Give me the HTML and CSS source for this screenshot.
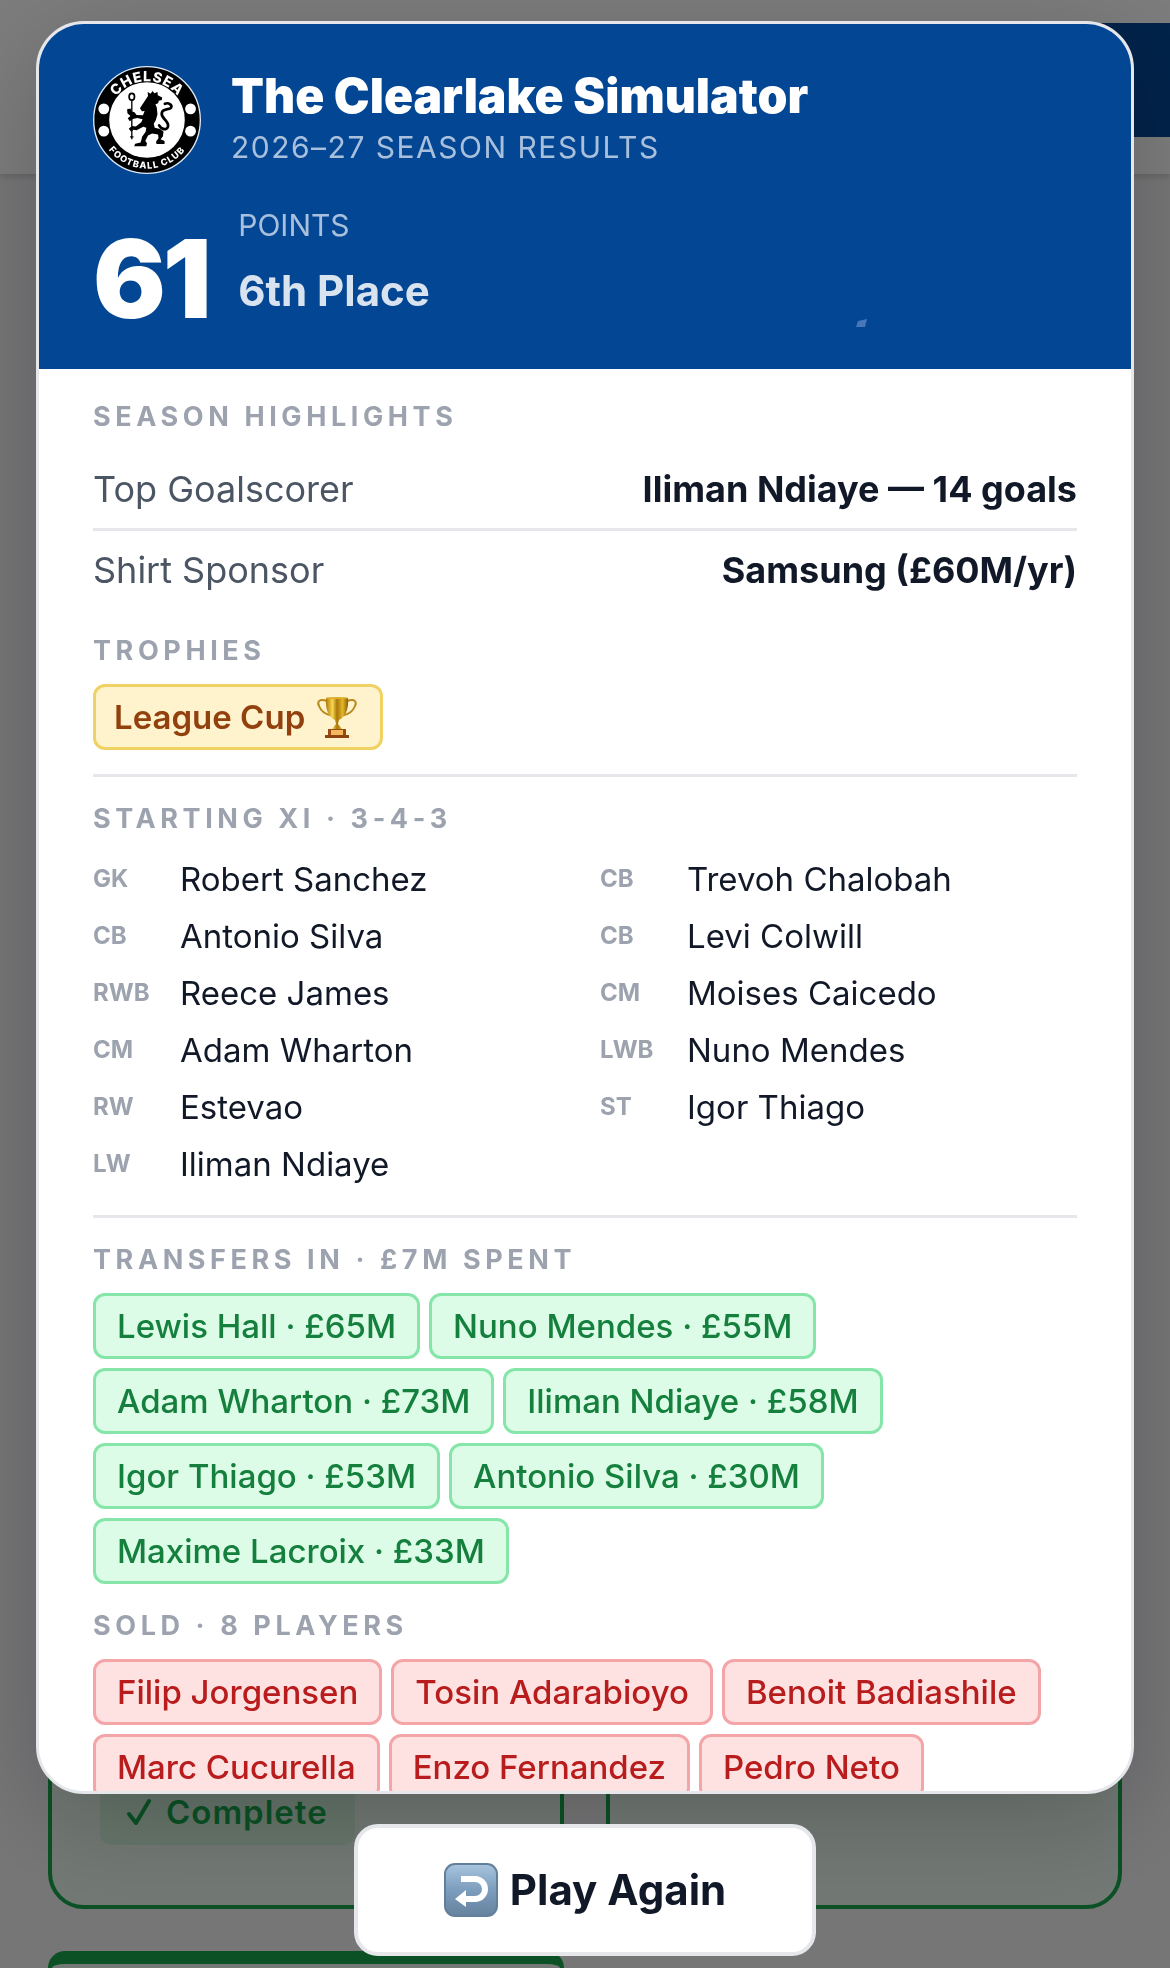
FILE: index.html
```html
<!DOCTYPE html>
<html lang="en">
<head>
    <meta charset="UTF-8">
    <meta name="viewport" content="width=device-width, initial-scale=1.0">
    <title>The Clearlake Simulator</title>
    <link rel="stylesheet" href="styles.css">
</head>
<body>
    <!-- Page behind the results window -->
    <div class="page" aria-hidden="true">
        <header class="topbar">
            <div class="topbar-action"></div>
        </header>
        <main class="board">
            <section class="task">
                <span class="task-status">
                    <svg class="check" viewBox="0 0 24 28"><path d="M2 16l7 9L22 3" fill="none" stroke="currentColor" stroke-width="4" stroke-linecap="round" stroke-linejoin="round"/></svg>
                    Complete
                </span>
            </section>
            <section class="task"></section>
            <section class="task task-next"></section>
        </main>
    </div>

    <div class="overlay">
        <div class="results" role="dialog" aria-labelledby="resultsTitle">
            <div class="results-header">
                <div class="brand">
                    <svg class="crest" viewBox="40 35 320 320" role="img" aria-label="Chelsea Football Club">
                        <defs>
                            <path id="arcTop" d="M85 195a115 115 0 0 1 230 0"/>
                            <path id="arcBottom" d="M56 195a144 144 0 0 0 288 0"/>
                        </defs>
                        <circle cx="200" cy="195" r="158" fill="#000" stroke="#dfe9f5" stroke-width="4"/>
                        <circle cx="200" cy="195" r="112" fill="#fff"/>
                        <g fill="#fff">
                            <circle cx="72" cy="162" r="16"/>
                            <circle cx="72" cy="228" r="16"/>
                            <circle cx="329" cy="162" r="16"/>
                            <circle cx="329" cy="228" r="16"/>
                        </g>
                        <text class="crest-name"><textPath href="#arcTop" startOffset="50%">CHELSEA</textPath></text>
                        <text class="crest-club"><textPath href="#arcBottom" startOffset="50%">FOOTBALL CLUB</textPath></text>
                        <!-- staff -->
                        <ellipse cx="155" cy="126" rx="8" ry="10" fill="none" stroke="#000" stroke-width="5"/>
                        <path d="M155 136v116M150 245h10" stroke="#000" stroke-width="4" fill="none"/>
                        <!-- lion -->
                        <path d="M203 124l-1-12 9 5 5-8 6 7 9-4 1 10 13 6-1 8-9 2-2 7-8 3 4 10 2 20-5 18-6 10 3 12 16 4 10 8-2 14-7 8 12 5v9h-24l-1-7 7-10-1-11-18-3-12 6-8 16 5 7-2 9h-36l3-8 16-3 5-18 10-14 2-12-9-3-20 10-9-1-7 6-7-9 9-8 12 1 16-12 4-9-16-4-13 3-9 7-6-9 8-7-9-8-1-12 10-2 4 9 8 2 6 8 19 1 5-13-8 1-6-9z" fill="#000"/>
                        <path d="M236 211c14 20 32 10 25-6-6-14-21-17-17-32 4-13 22-8 27-14 5-8-7-17-18-12" fill="none" stroke="#000" stroke-width="8" stroke-linecap="round"/>
                    </svg>
                    <div>
                        <h1 class="title" id="resultsTitle">The Clearlake Simulator</h1>
                        <p class="subtitle">2026–27 SEASON RESULTS</p>
                    </div>
                </div>
                <div class="score">
                    <span class="score-value">61</span>
                    <div>
                        <p class="score-label">POINTS</p>
                        <p class="score-place">6th Place</p>
                    </div>
                    <svg class="score-mark" viewBox="0 0 12 9"><path d="M1 9l2-6 9-2-2 8z" fill="#4677b8"/></svg>
                </div>
            </div>

            <div class="results-body">
                <h2>SEASON HIGHLIGHTS</h2>
                <dl class="highlights">
                    <div class="highlight"><dt>Top Goalscorer</dt><dd>Iliman Ndiaye — 14 goals</dd></div>
                    <div class="highlight"><dt>Shirt Sponsor</dt><dd>Samsung (£60M/yr)</dd></div>
                </dl>

                <h2>TROPHIES</h2>
                <ul class="chips">
                    <li class="chip chip-trophy">League Cup
                        <svg class="trophy" viewBox="0 0 44 44">
                            <defs>
                                <linearGradient id="gold">
                                    <stop offset="0" stop-color="#b07908"/>
                                    <stop offset=".3" stop-color="#f7d651"/>
                                    <stop offset=".5" stop-color="#a87609"/>
                                    <stop offset=".75" stop-color="#e3b72a"/>
                                    <stop offset="1" stop-color="#8a5a04"/>
                                </linearGradient>
                            </defs>
                            <path d="M12 6C4 3 2 7 4 11c2 5 6 8 11 9M32 6c8-3 10 1 8 5-2 5-6 8-11 9" fill="none" stroke="#b98a1c" stroke-width="2"/>
                            <path d="M11 3h22c1 12-3 19-9 22l-1 4 4 5H17l4-5-1-4C14 22 10 15 11 3z" fill="url(#gold)"/>
                            <ellipse cx="22" cy="3" rx="11" ry="1" fill="#dcae2c"/>
                            <path d="M13 34h18v7H13z" fill="#9a4b12"/>
                            <path d="M16 35h12v5H16z" fill="#f5b85c"/>
                            <path d="M10 40h24v3H10z" fill="#8f4310"/>
                        </svg>
                    </li>
                </ul>
                <hr>

                <h2>STARTING XI · 3-4-3</h2>
                <ul class="lineup">
                    <li><span class="pos">GK</span>Robert Sanchez</li>
                    <li><span class="pos">CB</span>Trevoh Chalobah</li>
                    <li><span class="pos">CB</span>Antonio Silva</li>
                    <li><span class="pos">CB</span>Levi Colwill</li>
                    <li><span class="pos">RWB</span>Reece James</li>
                    <li><span class="pos">CM</span>Moises Caicedo</li>
                    <li><span class="pos">CM</span>Adam Wharton</li>
                    <li><span class="pos">LWB</span>Nuno Mendes</li>
                    <li><span class="pos">RW</span>Estevao</li>
                    <li><span class="pos">ST</span>Igor Thiago</li>
                    <li><span class="pos">LW</span>Iliman Ndiaye</li>
                </ul>
                <hr>

                <h2>TRANSFERS IN · £7M SPENT</h2>
                <ul class="chips">
                    <li class="chip chip-in">Lewis Hall · £65M</li>
                    <li class="chip chip-in">Nuno Mendes · £55M</li>
                    <li class="chip chip-in">Adam Wharton · £73M</li>
                    <li class="chip chip-in">Iliman Ndiaye · £58M</li>
                    <li class="chip chip-in">Igor Thiago · £53M</li>
                    <li class="chip chip-in">Antonio Silva · £30M</li>
                    <li class="chip chip-in">Maxime Lacroix · £33M</li>
                </ul>

                <h2>SOLD · 8 PLAYERS</h2>
                <ul class="chips">
                    <li class="chip chip-out">Filip Jorgensen</li>
                    <li class="chip chip-out">Tosin Adarabioyo</li>
                    <li class="chip chip-out">Benoit Badiashile</li>
                    <li class="chip chip-out">Marc Cucurella</li>
                    <li class="chip chip-out">Enzo Fernandez</li>
                    <li class="chip chip-out">Pedro Neto</li>
                </ul>
            </div>
        </div>

        <button type="button" class="play-again">
            <svg class="return-icon" viewBox="0 0 54 54">
                <defs>
                    <linearGradient id="tile" x2="0" y2="1">
                        <stop offset="0" stop-color="#a9c5df"/>
                        <stop offset=".5" stop-color="#7c9dbd"/>
                        <stop offset="1" stop-color="#66829e"/>
                    </linearGradient>
                </defs>
                <rect x="1" y="1" width="52" height="52" rx="10" fill="url(#tile)" stroke="#647f9b" stroke-width="2"/>
                <path d="M17 16h14a10 10 0 0 1 0 20h-9" fill="none" stroke="#fff" stroke-width="6"/>
                <path d="M11 36l11-9v17z" fill="#fff"/>
            </svg>
            Play Again
        </button>
    </div>
</body>
</html>
```
FILE: styles.css
```css
* {
    box-sizing: border-box;
    margin: 0;
    padding: 0;
}

body {
    font-family: Inter, "Liberation Sans", sans-serif;
    height: 100vh;
    overflow: hidden;
    background-color: #ececef;
    color: #111827;
}

ul {
    list-style: none;
}

/* Page behind */
.page {
    height: 100vh;
    display: flex;
    flex-direction: column;
}

.topbar {
    display: flex;
    justify-content: flex-end;
    padding: 23px 0 37px;
    background-color: #f8f8f8;
    box-shadow: 0 3px 6px rgba(0, 0, 0, 0.15);
}

.topbar-action {
    width: 30%;
    height: 114px;
    background-color: #034694;
}

.board {
    flex: 1;
    display: grid;
    grid-template-columns: 1fr 1fr;
    grid-template-rows: 1fr auto;
    gap: 42px;
    padding: 42px 48px 0;
}

.task {
    display: flex;
    align-items: flex-end;
    padding: 60px 48px;
    border: 4px solid #16a34a;
    border-radius: 36px;
    background-color: #e4f2e8;
}

.task-next {
    padding: 4px 0 0;
    border-top-width: 13px;
    border-bottom: 0;
    border-radius: 36px 36px 0 0;
}

.task-status {
    display: flex;
    align-items: center;
    gap: 15px;
    padding: 12px 27px;
    border-radius: 12px;
    background-color: #cdebd6;
    color: #16a34a;
    font-size: 33px;
    font-weight: 600;
    line-height: 42px;
    letter-spacing: 1px;
}

.check {
    width: 24px;
    height: 28px;
}

/* Results window */
.overlay {
    position: fixed;
    inset: 0;
    display: flex;
    flex-direction: column;
    align-items: center;
    gap: 30px;
    padding: 21px 36px 12px;
    background-color: rgba(0, 0, 0, 0.5);
}

.results {
    flex: 0 1 auto;
    width: 100%;
    min-height: 0;
    overflow: hidden;
    border: 3px solid #e5e7eb;
    border-radius: 48px;
    background-color: #fff;
    box-shadow: 0 24px 96px rgba(0, 0, 0, 0.2);
}

.results-header {
    padding: 42px 54px 36px;
    background-color: #034694;
    color: #fff;
}

.brand {
    display: flex;
    align-items: center;
    gap: 30px;
    margin-bottom: 27px;
}

.crest {
    width: 108px;
    height: 108px;
}

.crest-name,
.crest-club {
    fill: #fff;
    font-weight: 800;
    text-anchor: middle;
}

.crest-name {
    font-size: 42px;
    letter-spacing: 2px;
}

.crest-club {
    font-size: 27px;
    letter-spacing: 3px;
}

.title {
    font-size: 48px;
    font-weight: 900;
    line-height: 54px;
}

.subtitle {
    font-size: 30px;
    line-height: 48px;
    letter-spacing: 0.05em;
    color: #a9c0dc;
}

.score {
    display: flex;
    align-items: flex-end;
    gap: 30px;
}

.score-value {
    font-size: 108px;
    font-weight: 900;
    line-height: 108px;
    letter-spacing: -0.03em;
}

.score-label {
    font-size: 30px;
    line-height: 48px;
    color: #a9c0dc;
}

.score-place {
    font-size: 42px;
    font-weight: 700;
    line-height: 84px;
    color: #d9e3ef;
}

.score-mark {
    width: 12px;
    height: 9px;
    margin: 0 210px 6px auto;
}

.results-body {
    padding: 30px 54px;
}

h2 {
    margin-bottom: 16px;
    font-size: 27px;
    font-weight: 700;
    line-height: 35px;
    letter-spacing: 0.17em;
    color: #9ca3af;
}

.highlights,
.chips {
    margin-bottom: 24px;
}

.highlight {
    display: flex;
    justify-content: space-between;
    font-size: 36px;
    line-height: 78px;
}

.highlight + .highlight {
    border-top: 3px solid #e5e7eb;
}

.highlight dt {
    color: #4b5563;
}

.highlight dd {
    font-weight: 700;
}

.chips {
    display: flex;
    flex-wrap: wrap;
    gap: 9px;
}

.chip {
    padding: 0 21px;
    border: 3px solid;
    border-radius: 12px;
    font-size: 33px;
    font-weight: 500;
    line-height: 60px;
}

.chip-trophy {
    display: flex;
    align-items: center;
    gap: 10px;
    padding: 0 21px 0 18px;
    border-color: #f0d264;
    background-color: #fef3cd;
    color: #92400e;
    font-weight: 600;
}

.trophy {
    width: 44px;
    height: 44px;
}

.chip-in {
    border-color: #86e5a8;
    background-color: #dcfce7;
    color: #15803d;
}

.chip-out {
    border-color: #f3a5a8;
    background-color: #fee2e2;
    color: #b91c1c;
}

hr {
    margin-bottom: 24px;
    border: 0;
    border-top: 3px solid #e5e7eb;
}

.lineup {
    display: grid;
    grid-template-columns: 1fr 1fr;
    gap: 3px 30px;
    margin-bottom: 24px;
    font-size: 33px;
    line-height: 54px;
}

.lineup li {
    display: flex;
}

.pos {
    width: 87px;
    font-size: 24px;
    font-weight: 700;
    color: #9ca3af;
}

.play-again {
    flex: none;
    display: flex;
    align-items: center;
    gap: 12px;
    padding: 0 86px;
    border: 4px solid #e5e7eb;
    border-radius: 24px;
    background-color: #fff;
    color: #111827;
    font-family: inherit;
    font-size: 42px;
    font-weight: 700;
    line-height: 124px;
    cursor: pointer;
}

.return-icon {
    width: 54px;
    height: 54px;
}
```
